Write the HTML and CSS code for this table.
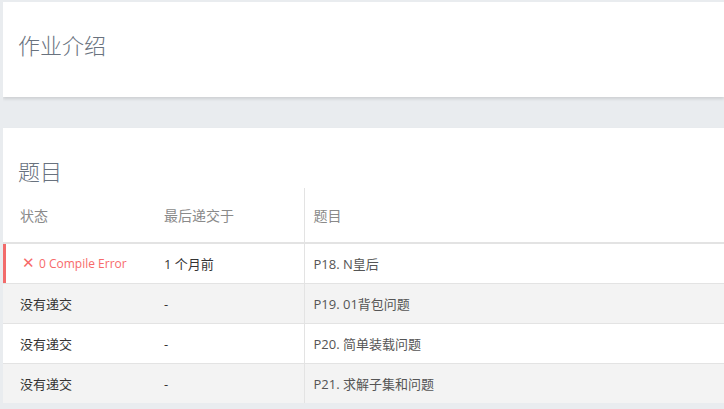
FILE: index.html
```html
<!DOCTYPE html>
<html lang="zh">
<head>
<meta charset="utf-8">
<link rel="stylesheet" href="styles.css">
</head>
<body>
<section class="card intro">
  <h1 class="card-title">作业介绍</h1>
</section>
<section class="card problems">
  <h1 class="card-title">题目</h1>
  <table class="ptable">
    <colgroup>
      <col class="c-status">
      <col class="c-time">
      <col class="c-title">
    </colgroup>
    <thead>
      <tr>
        <th>状态</th>
        <th>最后递交于</th>
        <th class="col-title">题目</th>
      </tr>
    </thead>
    <tbody>
      <tr class="row-fail">
        <td class="status-fail"><span class="x-icon">✕</span>0 Compile Error</td>
        <td>1 个月前</td>
        <td class="col-title"><a href="#">P18. N皇后</a></td>
      </tr>
      <tr class="row-alt">
        <td>没有递交</td>
        <td>-</td>
        <td class="col-title"><a href="#">P19. 01背包问题</a></td>
      </tr>
      <tr>
        <td>没有递交</td>
        <td>-</td>
        <td class="col-title"><a href="#">P20. 简单装载问题</a></td>
      </tr>
      <tr class="row-alt">
        <td>没有递交</td>
        <td>-</td>
        <td class="col-title"><a href="#">P21. 求解子集和问题</a></td>
      </tr>
    </tbody>
  </table>
</section>
</body>
</html>
```

FILE: styles.css
```css
html, body {
  overflow: hidden;
}
body {
  margin: 2px 0 0 3px;
  background: #e9ecef;
  font-family: "Open Sans", "Noto Sans CJK SC", sans-serif;
  color: #333;
}
.card {
  background: #fff;
  box-shadow: 0 2px 3px rgba(0, 0, 0, 0.12);
}
.card-title {
  margin: 0;
  padding: 0 15px;
  font-size: 22px;
  line-height: 30px;
  font-weight: 300;
  color: #69727e;
}
.intro {
  padding: 28px 0 37px;
}
.problems {
  margin-top: 31px;
  padding-top: 28px;
}
.ptable {
  width: 100%;
  border-collapse: collapse;
  margin-top: 2px;
}
.c-status { width: 144px; }
.c-time { width: 157px; }
.ptable th {
  text-align: left;
  font-weight: normal;
  font-size: 14px;
  color: #8a8a8a;
  height: 54px;
  padding: 0 0 0 17px;
  border-bottom: 2px solid #e3e3e3;
}
.ptable td {
  font-size: 13px;
  height: 39px;
  padding: 0 0 0 17px;
  border-bottom: 1px solid #e3e3e3;
}
.ptable tbody tr:last-child td {
  border-bottom: none;
}
.ptable .col-title {
  border-left: 1px solid #e3e3e3;
  padding-left: 9px;
}
.ptable a {
  color: #555;
  text-decoration: none;
}
.row-alt td {
  background: #f3f3f3;
}
.row-fail td:first-child {
  box-shadow: inset 3px 0 0 #f26b6b;
}
.ptable .status-fail {
  color: #f76a6a;
  font-size: 12px;
}
.x-icon {
  display: inline-block;
  margin: 0 4px 0 2px;
  font-size: 15px;
  font-weight: normal;
  line-height: 1;
}
```
